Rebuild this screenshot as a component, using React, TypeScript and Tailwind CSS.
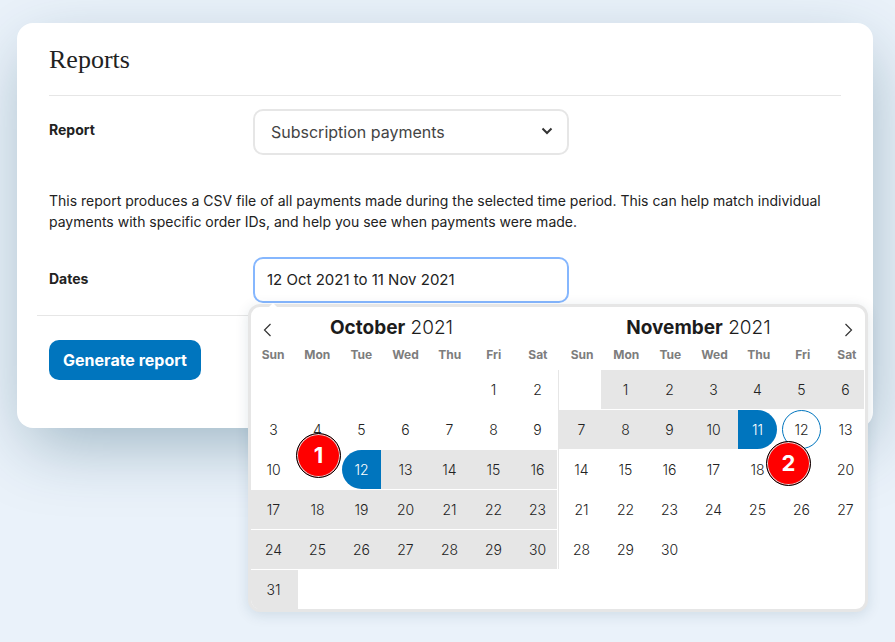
import React from 'react';
import clsx from 'clsx';

type Range = { from: number; to: number };

type MonthProps = {
  name: string;
  year: number;
  offset: number;
  days: number;
  range: Range;
  selected: number;
  edge: 'start' | 'end';
  today?: number;
};

const WEEKDAYS = ['Sun', 'Mon', 'Tue', 'Wed', 'Thu', 'Fri', 'Sat'];

const MonthHeader = ({ name, year }: { name: string; year: number }) => (
  <div className="flex-1 pr-[26px] text-center text-[19px] leading-[42px] text-[#1c1c1c]">
    <span className="font-bold">{name}</span> <span className="font-light">{year}</span>
  </div>
);

const Weekdays = () => (
  <div className="grid w-[309px] shrink-0 grid-cols-7 text-center text-xs leading-7 font-bold text-[#7d7d7d]">
    {WEEKDAYS.map((day) => (
      <span key={day}>{day}</span>
    ))}
  </div>
);

const MonthDays = ({ name, offset, days, range, selected, edge, today }: MonthProps) => {
  // Empty cells before the 1st keep the weekday columns lined up
  const cells = [
    ...Array.from({ length: offset }, () => 0),
    ...Array.from({ length: days }, (_, i) => i + 1),
  ];

  return (
    <div className="grid grid-cols-[repeat(7,44px)] gap-y-px">
      {cells.map((day, i) =>
        day === 0 ? (
          <span key={`empty-${i}`} />
        ) : (
          <div key={day} className="pr-0.5 pl-[3px]">
            <button
              type="button"
              aria-label={`${day} ${name}`}
              className={clsx(
                'block h-[39px] w-full text-center text-sm font-light',
                day === selected && 'bg-[#0075be] text-white',
                day === selected && edge === 'start' && 'rounded-l-full',
                day === selected && edge === 'end' && 'rounded-r-full',
                day !== selected && 'text-[#222]',
                day !== selected &&
                  day >= range.from &&
                  day <= range.to &&
                  'bg-[#e6e6e6] shadow-[-5px_0_0_#e6e6e6,5px_0_0_#e6e6e6]',
                day === today && 'rounded-full border border-[#0075be]'
              )}
            >
              {day}
            </button>
          </div>
        )
      )}
    </div>
  );
};

const october: MonthProps = {
  name: 'October',
  year: 2021,
  offset: 5,
  days: 31,
  range: { from: 13, to: 31 },
  selected: 12,
  edge: 'start',
};

const november: MonthProps = {
  name: 'November',
  year: 2021,
  offset: 1,
  days: 30,
  range: { from: 1, to: 10 },
  selected: 11,
  edge: 'end',
  today: 12,
};

const Marker = ({ label, className }: { label: string; className: string }) => (
  <span
    className={clsx(
      'absolute flex size-[45px] items-center justify-center rounded-full border border-black bg-[#f00] text-[22px] font-bold text-white inset-ring-1 inset-ring-[#ddd]',
      className
    )}
  >
    {label}
  </span>
);

const DatePicker = () => (
  <div className="absolute top-[47px] left-[-5px] z-10 w-[620px] rounded-xl border-3 border-[#e6e6e6] bg-white shadow-[0_3px_14px_rgba(0,60,80,0.12)]">
    <svg className="absolute top-[-5px] left-4 h-[6px] w-3" viewBox="0 0 12 6" aria-hidden="true">
      <path d="M1 6 6 1l5 5z" fill="#fff" />
    </svg>
    <div className="relative flex h-[34px]">
      <button type="button" aria-label="Previous month" className="absolute top-4 left-3">
        <svg className="h-[14px] w-[9px]" viewBox="0 0 9 14" fill="none" stroke="#333" strokeWidth="1.2">
          <path d="M7.5 1 1.5 7l6 6" />
        </svg>
      </button>
      <MonthHeader name={october.name} year={october.year} />
      <MonthHeader name={november.name} year={november.year} />
      <button type="button" aria-label="Next month" className="absolute top-4 right-3">
        <svg className="h-[14px] w-[9px]" viewBox="0 0 9 14" fill="none" stroke="#333" strokeWidth="1.2">
          <path d="m1.5 1 6 6-6 6" />
        </svg>
      </button>
    </div>
    <div className="flex">
      <Weekdays />
      <Weekdays />
    </div>
    <div className="flex items-start overflow-hidden rounded-b-[9px] pt-px">
      <div className="w-[306px] shrink-0 overflow-hidden">
        <MonthDays {...october} />
      </div>
      <div className="ml-px w-[306px] shrink-0 overflow-hidden border-l border-[#e6e6e6]">
        <MonthDays {...november} />
      </div>
    </div>
    <Marker label="1" className="top-[126px] left-[45px]" />
    <Marker label="2" className="top-[134px] left-[515px]" />
  </div>
);

export default function App() {
  return (
    <div className="min-h-screen bg-[#eaf2fa] pt-[23px] pr-[22px] pb-8 pl-[17px] font-['Inter',sans-serif] text-[#222]">
      <main className="rounded-2xl bg-white px-8 pb-12 shadow-[3px_22px_68px_-8px_rgba(0,60,85,0.34)]">
        <h1 className="h-[73px] border-b border-[#e6e6e6] font-['Liberation_Serif',serif] text-[26px] leading-[74px]">
          Reports
        </h1>

        <div className="mt-[13px] grid grid-cols-[204px_316px]">
          <label htmlFor="report" className="text-sm leading-[42px] font-bold">
            Report
          </label>
          <div className="relative">
            <select
              id="report"
              className="h-[46px] w-full appearance-none rounded-[10px] border-2 border-[#e6e6e6] bg-white px-4 text-base text-[#444]"
            >
              <option>Subscription payments</option>
            </select>
            <svg
              className="pointer-events-none absolute top-[18px] right-4 h-2 w-3"
              viewBox="0 0 12 8"
              fill="none"
              stroke="#333"
              strokeWidth="2"
            >
              <path d="m1.5 1.5 4.5 4.5 4.5-4.5" />
            </svg>
          </div>
        </div>

        <p className="mt-[35px] text-sm leading-[21px]">
          This report produces a CSV file of all payments made during the selected time period. This can help match
          individual payments with specific order IDs, and help you see when payments were made.
        </p>

        <div className="mt-[25px] grid grid-cols-[204px_316px]">
          <label htmlFor="dates" className="text-sm leading-[44px] font-bold">
            Dates
          </label>
          <div className="relative">
            <input
              id="dates"
              type="text"
              readOnly
              value="12 Oct 2021 to 11 Nov 2021"
              className="h-[46px] w-full rounded-[10px] border-2 border-[#86b7fe] bg-white px-3 pb-0.5 text-[15px] outline-none"
            />
            <DatePicker />
          </div>
        </div>

        <hr className="-mx-3 mt-3 border-[#e6e6e6]" />

        <button
          type="button"
          className="mt-6 block h-10 w-[152px] rounded-[10px] bg-[#0075be] text-base font-bold text-white"
        >
          Generate report
        </button>
      </main>
    </div>
  );
}
